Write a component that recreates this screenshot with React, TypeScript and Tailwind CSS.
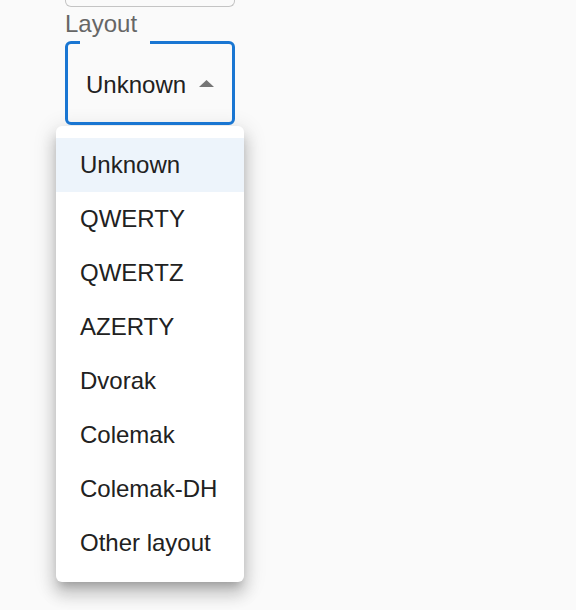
import React from "react";

const items = ["Unknown", "QWERTY", "QWERTZ", "AZERTY", "Dvorak", "Colemak", "Colemak-DH", "Other layout"];

export default function App() {
  return (
    <div
      className="min-h-screen bg-[#fafafa] pl-[56px]"
      style={{ fontFamily: '"Liberation Sans", Arial, sans-serif' }}
    >
      <div className="ml-[9px] w-[170px] h-[7px] border border-t-0 border-[#c4c4c4] rounded-b-[6px]" />
      <div className="ml-[9px] mt-[5px] text-[24px] leading-[24px] text-[#666666]">Layout</div>
      <div className="relative ml-[9px] mt-[5px] w-[170px] h-[84px] border-[3px] border-[#1976d2] rounded-[6px] flex items-start pt-[29px] pl-[18px] pr-[18px]">
        <span className="absolute top-[-3px] left-[12px] w-[70px] h-[3px] bg-[#fafafa]" />
        <span className="text-[24px] leading-[24px] text-[#212121]">Unknown</span>
        <svg className="ml-auto mt-[7px]" width="15" height="8" viewBox="0 0 15 8">
          <polygon points="0,7 7.5,0 15,7" fill="#757575" />
        </svg>
      </div>
      <div className="mt-[1px] w-[188px] bg-white rounded-[6px] py-[12px] shadow-[0_7px_8px_-4px_rgba(0,0,0,0.2),0_12px_15px_2px_rgba(0,0,0,0.14),0_5px_21px_3px_rgba(0,0,0,0.12)]">
        {items.map((it, i) => (
          <div
            key={it}
            className={
              "h-[54px] px-[24px] flex items-center text-[24px] leading-[36px] text-[#212121] " +
              (i === 0 ? "bg-[#edf4fb]" : "")
            }
          >
            {it}
          </div>
        ))}
      </div>
    </div>
  );
}
